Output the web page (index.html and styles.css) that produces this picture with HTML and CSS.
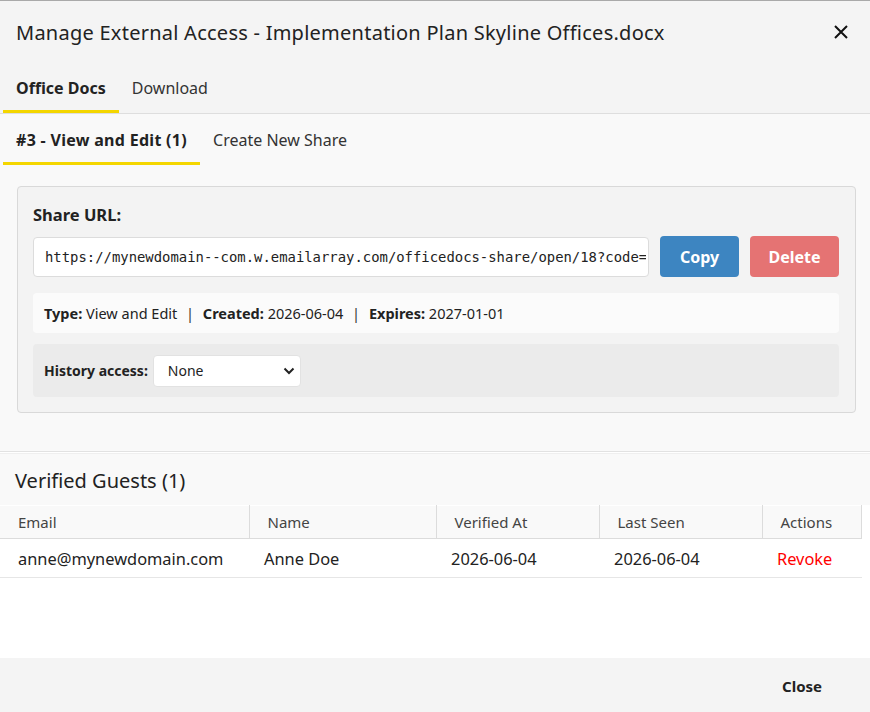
FILE: index.html
```html
<!DOCTYPE html>
<html lang="en">
<head>
  <meta charset="UTF-8">
  <meta name="viewport" content="width=device-width, initial-scale=1.0">
  <title>Manage External Access</title>
  <link rel="stylesheet" href="styles.css">
</head>
<body>
  <div class="dialog">
    <div class="dlg-head">
      <h2 class="dlg-title">Manage External Access - Implementation Plan Skyline Offices.docx</h2>
      <button class="dlg-close" aria-label="Close">
        <svg width="14" height="14" viewBox="0 0 14 14"><path d="M1 1 L13 13 M13 1 L1 13" stroke="#111" stroke-width="2" fill="none"/></svg>
      </button>
    </div>

    <nav class="tabs main-tabs">
      <span class="tab active">Office Docs</span>
      <span class="tab">Download</span>
    </nav>

    <div class="share-area">
      <nav class="tabs sub-tabs">
        <span class="tab active">#3 - View and Edit (1)</span>
        <span class="tab">Create New Share</span>
      </nav>

      <div class="share-panel">
        <div class="share-label">Share URL:</div>
        <div class="url-row">
          <input class="url-input" type="text" readonly value="https://mynewdomain--com.w.emailarray.com/officedocs-share/open/18?code=8f3a2c91d7">
          <button class="btn btn-copy">Copy</button>
          <button class="btn btn-delete">Delete</button>
        </div>
        <div class="info-row">
          <b>Type:</b> View and Edit <span class="sep">|</span>
          <b>Created:</b> 2026-06-04 <span class="sep">|</span>
          <b>Expires:</b> 2027-01-01
        </div>
        <div class="history-row">
          <label for="history">History access:</label>
          <div class="select-wrap">
            <select id="history" class="history-select">
              <option>None</option>
              <option>Read only</option>
              <option>Full</option>
            </select>
            <svg class="chevron" width="12" height="8" viewBox="0 0 12 8"><path d="M1.5 1.5 L6 6 L10.5 1.5" stroke="#222" stroke-width="2" fill="none"/></svg>
          </div>
        </div>
      </div>
    </div>

    <div class="guests">
      <h3 class="guests-title">Verified Guests (1)</h3>
      <table class="guests-table">
        <thead>
          <tr>
            <th class="c-email">Email</th>
            <th class="c-name">Name</th>
            <th class="c-date">Verified At</th>
            <th class="c-date">Last Seen</th>
            <th class="c-act">Actions</th>
          </tr>
        </thead>
        <tbody>
          <tr>
            <td>anne@mynewdomain.com</td>
            <td>Anne Doe</td>
            <td>2026-06-04</td>
            <td>2026-06-04</td>
            <td><a class="revoke" href="#">Revoke</a></td>
          </tr>
        </tbody>
      </table>
    </div>

    <div class="dlg-foot">
      <button class="btn-close">Close</button>
    </div>
  </div>
</body>
</html>
```

FILE: styles.css
```css
* {
  box-sizing: border-box;
}
body {
  margin: 0;
  background: #fff;
  font-family: "Noto Sans", "Open Sans", sans-serif;
  color: #222;
}
.dialog {
  height: 712px;
  display: flex;
  flex-direction: column;
  border-top: 1px solid #a9a9a9;
  background: #fff;
  overflow: hidden;
}

/* header */
.dlg-head {
  height: 62px;
  display: flex;
  align-items: center;
  justify-content: space-between;
  padding: 0 22px 0 16px;
  background: #f4f4f4;
}
.dlg-title {
  margin: 0;
  font-size: 20px;
  font-weight: 400;
  color: #222;
  letter-spacing: 0.25px;
}
.dlg-close {
  border: 0;
  background: none;
  padding: 0;
  width: 14px;
  height: 14px;
  cursor: pointer;
}

/* tabs */
.tabs {
  display: flex;
}
.tab {
  font-size: 16px;
  line-height: 22px;
  padding: 0 13px;
  border-bottom: 3px solid transparent;
  color: #333;
  cursor: pointer;
}
.tab.active {
  font-weight: 700;
  color: #222;
  border-bottom-color: #f4d600;
}
.main-tabs {
  background: #f4f4f4;
  padding-left: 3px;
  border-bottom: 1px solid #dedede;
}
.main-tabs .tab {
  padding-top: 14px;
  padding-bottom: 11px;
}
.sub-tabs {
  padding-left: 3px;
}
.sub-tabs .tab {
  padding-top: 15px;
  padding-bottom: 11px;
}
.sub-tabs .tab.active {
  letter-spacing: 0.3px;
}

/* share area */
.share-area {
  background: #f9f9f9;
  padding-bottom: 38px;
  border-bottom: 1px solid #e2e2e2;
}
.share-panel {
  margin: 21px 14px 0 17px;
  padding: 17px 16px 15px 15px;
  background: #f3f3f3;
  border: 1px solid #d9d9d9;
  border-radius: 4px;
}
.share-label {
  font-size: 16.5px;
  font-weight: 700;
  line-height: 22px;
  margin-bottom: 10px;
}
.url-row {
  display: flex;
  align-items: center;
  gap: 11px;
}
.url-input {
  flex: 1;
  min-width: 0;
  height: 40px;
  padding: 0 2px 0 11px;
  border: 1px solid #dcdcdc;
  border-radius: 4px;
  background: #fff;
  font-family: "DejaVu Sans Mono", "Liberation Mono", monospace;
  font-size: 13.9px;
  color: #222;
}
.btn {
  height: 41px;
  border: 0;
  border-radius: 4px;
  color: #fff;
  font-family: inherit;
  font-size: 16px;
  font-weight: 700;
  cursor: pointer;
}
.btn-copy {
  width: 79px;
  background: #3d85c1;
}
.btn-delete {
  width: 89px;
  background: #e57373;
}
.info-row {
  margin-top: 16px;
  height: 40px;
  padding: 0 11px;
  line-height: 40px;
  background: #fbfbfb;
  border-radius: 4px;
  font-size: 14.5px;
  white-space: nowrap;
}
.info-row .sep {
  margin: 0 5px;
  color: #333;
}
.history-row {
  margin-top: 11px;
  height: 53px;
  padding: 0 11px;
  display: flex;
  align-items: center;
  gap: 5px;
  background: #ebebeb;
  border-radius: 4px;
  font-size: 14px;
}
.history-row label {
  font-weight: 700;
}
.select-wrap {
  position: relative;
}
.history-select {
  appearance: none;
  -webkit-appearance: none;
  width: 148px;
  height: 32px;
  padding: 0 14px;
  border: 1px solid #e2e2e2;
  border-radius: 4px;
  background: #fff;
  font-family: inherit;
  font-size: 14px;
  color: #222;
}
.chevron {
  position: absolute;
  right: 6px;
  top: 12px;
  pointer-events: none;
}

/* verified guests */
.guests {
  flex: 1;
  margin-top: 1px;
  border-top: 1px solid #efefef;
  background: #fff;
}
.guests-title {
  margin: 0;
  padding: 13px 15px 11px;
  font-size: 20px;
  font-weight: 400;
  line-height: 27px;
  background: #f9f9f9;
}
.guests-table {
  width: 862px;
  border-collapse: collapse;
  table-layout: fixed;
}
.guests-table th {
  height: 33px;
  padding: 0 18px;
  text-align: left;
  font-size: 15px;
  font-weight: 400;
  color: #444;
  background: #f9f9f9;
  border-top: 1px solid #fff;
  border-right: 1px solid #dcdcdc;
  border-bottom: 1px solid #dcdcdc;
}
.guests-table th.c-email {
  width: 249px;
}
.guests-table th.c-name {
  width: 187px;
}
.guests-table th.c-date {
  width: 163px;
}
.guests-table td {
  height: 39px;
  padding: 0 15px;
  font-size: 16.4px;
  border-bottom: 1px solid #e6e6e6;
  white-space: nowrap;
}
.guests-table td:first-child {
  padding-left: 18px;
}
.revoke {
  color: #f00;
  text-decoration: none;
}

/* footer */
.dlg-foot {
  height: 54px;
  display: flex;
  align-items: center;
  justify-content: flex-end;
  padding-right: 32px;
  background: #f4f4f4;
}
.btn-close {
  border: 0;
  background: none;
  padding: 6px 16px 4px;
  font-family: inherit;
  font-size: 15px;
  font-weight: 700;
  color: #222;
  cursor: pointer;
}
```
